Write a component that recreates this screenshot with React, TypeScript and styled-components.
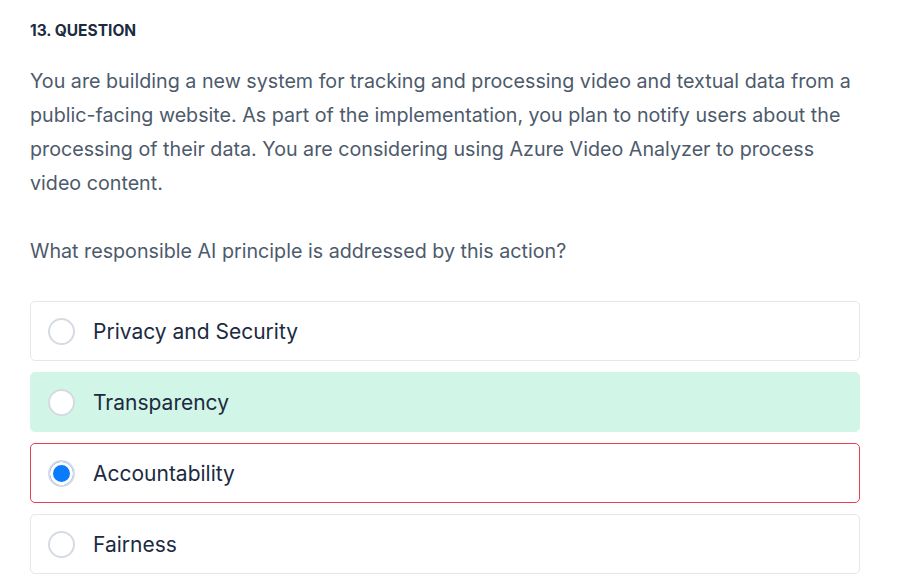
import styled, { createGlobalStyle } from "styled-components";

const GlobalStyle = createGlobalStyle`
  body {
    margin: 0;
    background: #ffffff;
    font-family: Inter, "Noto Sans", sans-serif;
  }
`;

interface Option {
  label: string;
  state?: "correct" | "wrong";
  checked?: boolean;
}

const options: Option[] = [
  { label: "Privacy and Security" },
  { label: "Transparency", state: "correct" },
  { label: "Accountability", state: "wrong", checked: true },
  { label: "Fairness" },
];

function App() {
  return (
    <>
      <GlobalStyle />
      <Page>
        <Heading>13. QUESTION</Heading>
        <Text>
          You are building a new system for tracking and processing video and
          textual data from a public-facing website. As part of the
          implementation, you plan to notify users about the processing of
          their data. You are considering using Azure Video Analyzer to process
          video content.
        </Text>
        <Prompt>What responsible AI principle is addressed by this action?</Prompt>
        <Options>
          {options.map((o) => (
            <OptionRow key={o.label} state={o.state}>
              <Radio checked={o.checked} />
              <Label>{o.label}</Label>
            </OptionRow>
          ))}
        </Options>
      </Page>
    </>
  );
}

export default App;

const Page = styled.div`
  padding: 22px 39px 0 30px;
`;

const Heading = styled.div`
  font-size: 15.5px;
  font-weight: 700;
  color: #1c2b3f;
  line-height: 18px;
  margin-bottom: 24px;
`;

const Text = styled.p`
  margin: 0 0 34px;
  font-size: 19.7px;
  line-height: 34px;
  color: #4d5a6b;
`;

const Prompt = styled(Text)`
  margin-bottom: 33px;
`;

const Options = styled.div`
  display: flex;
  flex-direction: column;
  gap: 11px;
`;

const OptionRow = styled.div<{ state?: "correct" | "wrong" }>`
  box-sizing: border-box;
  height: 60px;
  display: flex;
  align-items: center;
  padding-left: 17px;
  border-radius: 5px;
  border: 1px solid
    ${(p) =>
      p.state === "correct"
        ? "#d1f5e7"
        : p.state === "wrong"
        ? "#e8404f"
        : "#e6e7ea"};
  background: ${(p) => (p.state === "correct" ? "#d1f5e7" : "#ffffff")};
`;

const Radio = styled.span<{ checked?: boolean }>`
  box-sizing: border-box;
  width: 27px;
  height: 27px;
  border-radius: 50%;
  border: 2px solid #d6dae3;
  background: ${(p) => (p.checked ? "#0b7bfe" : "#ffffff")};
  box-shadow: ${(p) => (p.checked ? "inset 0 0 0 3px #ffffff" : "none")};
  margin-right: 18px;
  flex-shrink: 0;
`;

const Label = styled.span`
  font-size: 21px;
  color: #1c2b3f;
`;
